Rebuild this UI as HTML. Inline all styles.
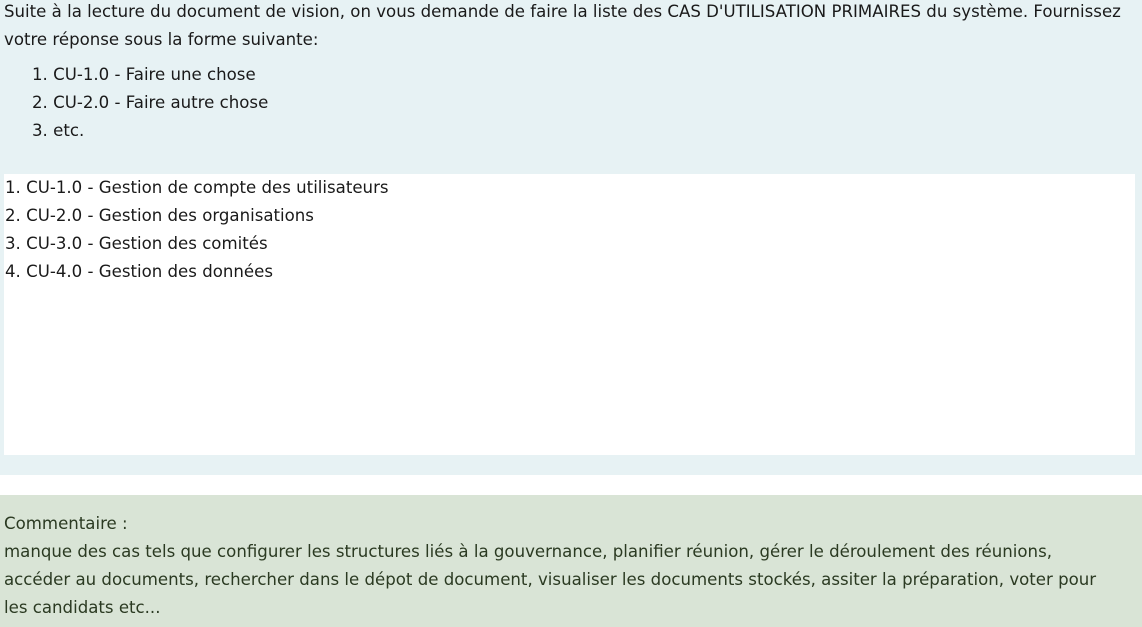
<!DOCTYPE html>
<html><head><meta charset="utf-8"><style>
html,body{margin:0;padding:0;width:1142px;height:627px;overflow:hidden;background:#fff;}
body{font-family:"DejaVu Sans",sans-serif;font-size:16.6px;line-height:28px;color:#1a1a1a;}
.q{position:absolute;left:0;top:0;width:1142px;height:475px;background:#e7f2f4;}
.q p{margin:0;position:absolute;left:4px;top:-2px;width:1125px;}
.q ol{margin:0;position:absolute;left:32px;top:61px;padding:0;list-style:none;}
.ta{position:absolute;left:4px;top:174px;width:1131px;height:281px;background:#fff;}
.ta div{position:absolute;left:1px;top:0;}
.c{position:absolute;left:0;top:495px;width:1142px;height:132px;background:#d9e4d6;color:#2b3a22;}
.c div{position:absolute;left:4px;top:15px;width:1105px;}
</style></head><body>
<div class="q">
<p>Suite à la lecture du document de vision, on vous demande de faire la liste des CAS D'UTILISATION PRIMAIRES du système. Fournissez votre réponse sous la forme suivante:</p>
<ol><li>1. CU-1.0 - Faire une chose</li><li>2. CU-2.0 - Faire autre chose</li><li>3. etc.</li></ol>
<div class="ta"><div>1. CU-1.0 - Gestion de compte des utilisateurs<br>2. CU-2.0 - Gestion des organisations<br>3. CU-3.0 - Gestion des comités<br>4. CU-4.0 - Gestion des données</div></div>
</div>
<div class="c"><div>Commentaire :<br>manque des cas tels que configurer les structures liés à la gouvernance, planifier réunion, gérer le déroulement des réunions, accéder au documents, rechercher dans le dépot de document, visualiser les documents stockés, assiter la préparation, voter pour les candidats etc...</div></div>
</body></html>
